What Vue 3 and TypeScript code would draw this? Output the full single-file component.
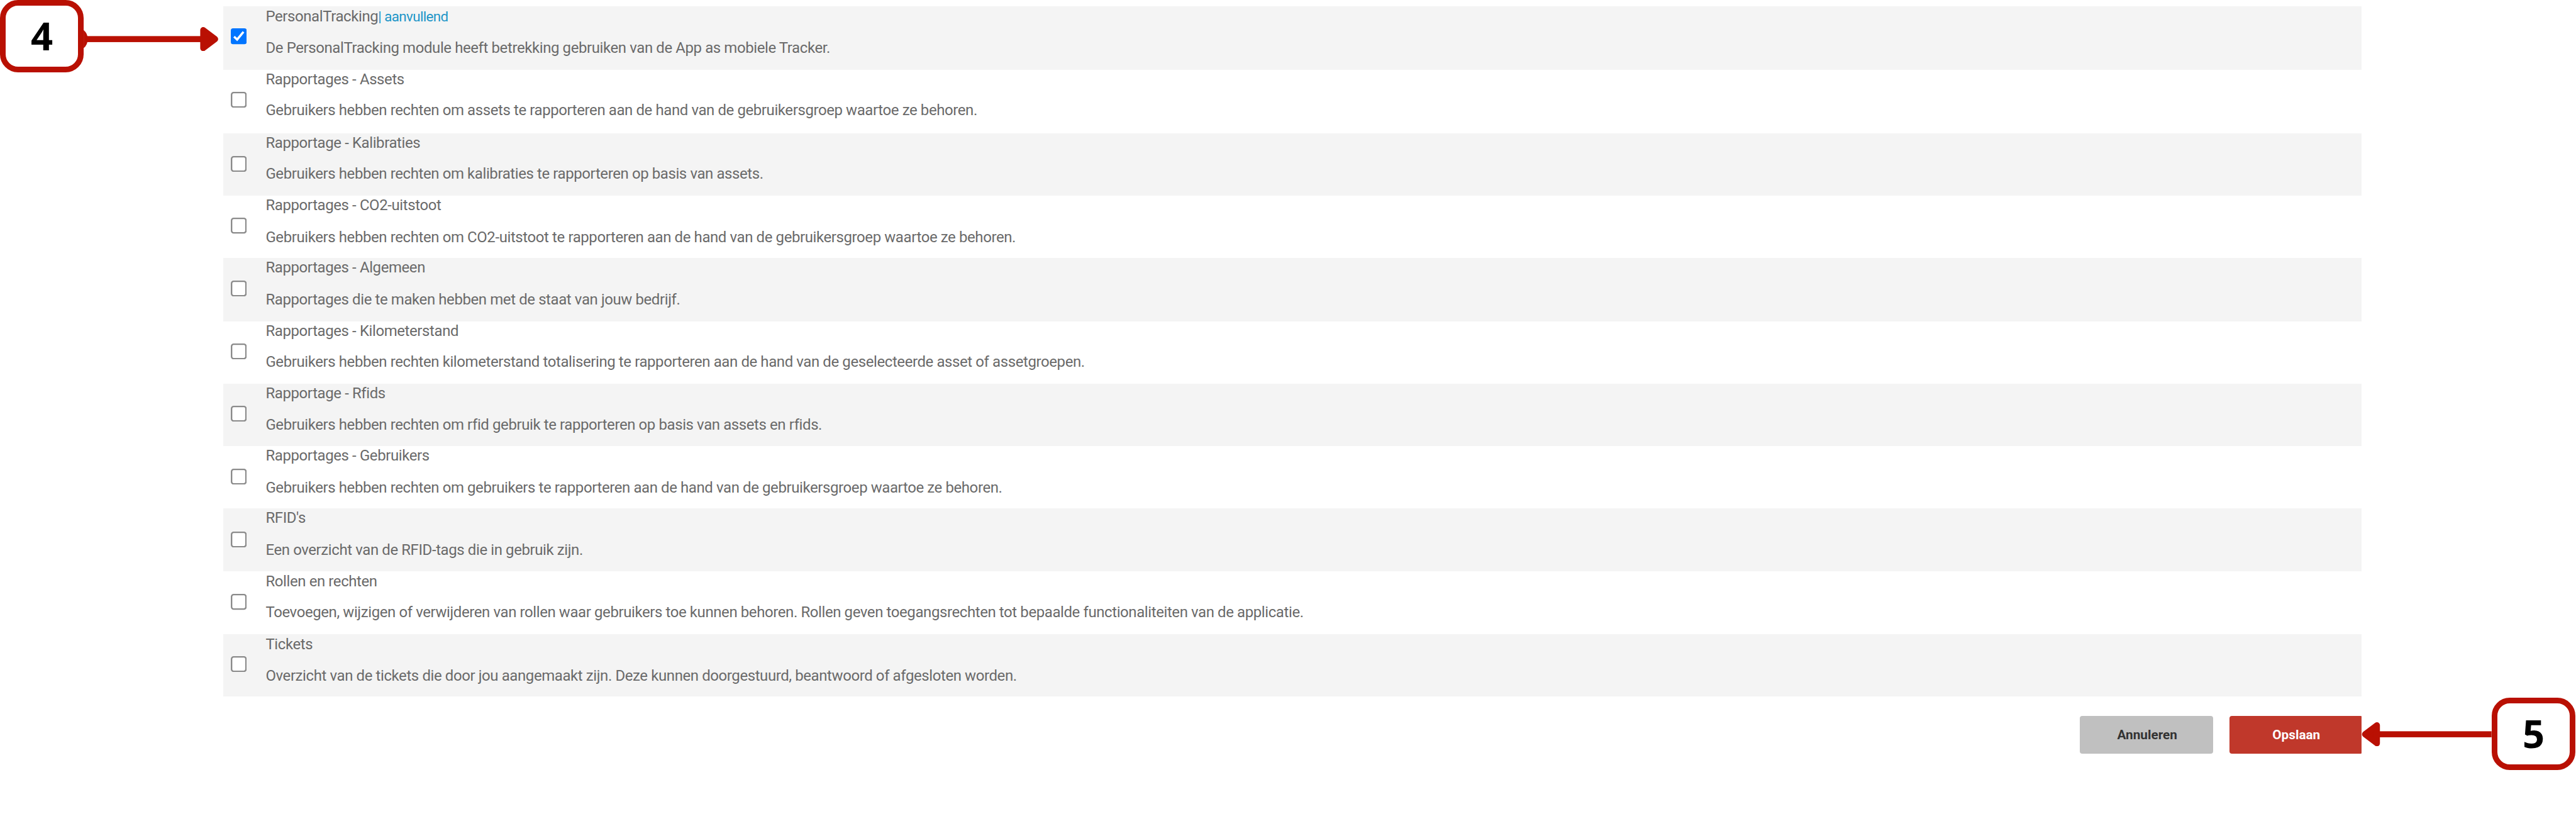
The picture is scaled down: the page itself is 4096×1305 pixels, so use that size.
<script setup lang="ts">
interface Right {
  title: string
  tag?: string
  text: string
  checked?: boolean
  height: number
  box: number
  gap: number
}

// height, box centre and text gap are in design pixels
const rights: Right[] = [
  { title: 'PersonalTracking', tag: 'aanvullend', text: 'De PersonalTracking module heeft betrekking gebruiken van de App as mobiele Tracker.', checked: true, height: 126, box: 59.8, gap: 63.4 },
  { title: 'Rapportages - Assets', text: 'Gebruikers hebben rechten om assets te rapporteren aan de hand van de gebruikersgroep waartoe ze behoren.', height: 126.8, box: 59.6, gap: 61.4 },
  { title: 'Rapportage - Kalibraties', text: 'Gebruikers hebben rechten om kalibraties te rapporteren op basis van assets.', height: 123.8, box: 60.5, gap: 61.2 },
  { title: 'Rapportages - CO2-uitstoot', text: 'Gebruikers hebben rechten om CO2-uitstoot te rapporteren aan de hand van de gebruikersgroep waartoe ze behoren.', height: 124.4, box: 60.7, gap: 63.3 },
  { title: 'Rapportages - Algemeen', text: 'Rapportages die te maken hebben met de staat van jouw bedrijf.', height: 126, box: 60.6, gap: 63 },
  { title: 'Rapportages - Kilometerstand', text: 'Gebruikers hebben rechten kilometerstand totalisering te rapporteren aan de hand van de geselecteerde asset of assetgroepen.', height: 124.3, box: 60.3, gap: 61.4 },
  { title: 'Rapportage - Rfids', text: 'Gebruikers hebben rechten om rfid gebruik te rapporteren op basis van assets en rfids.', height: 123.9, box: 60.3, gap: 63 },
  { title: 'Rapportages - Gebruikers', text: 'Gebruikers hebben rechten om gebruikers te rapporteren aan de hand van de gebruikersgroep waartoe ze behoren.', height: 124.6, box: 60.9, gap: 63.5 },
  { title: "RFID's", text: 'Een overzicht van de RFID-tags die in gebruik zijn.', height: 125.7, box: 61.8, gap: 63.4 },
  { title: 'Rollen en rechten', text: 'Toevoegen, wijzigen of verwijderen van rollen waar gebruikers toe kunnen behoren. Rollen geven toegangsrechten tot bepaalde functionaliteiten van de applicatie.', height: 125, box: 60.8, gap: 61.7 },
  { title: 'Tickets', text: 'Overzicht van de tickets die door jou aangemaakt zijn. Deze kunnen doorgestuurd, beantwoord of afgesloten worden.', height: 123.9, box: 59.7, gap: 63.4 },
]
</script>

<template>
  <main class="page">
    <section class="rights">
      <div v-for="r in rights" :key="r.title" class="right" :style="{ height: r.height / 10 + 'rem' }">
        <div class="tick" :style="{ height: r.box / 5 + 'rem' }">
          <svg v-if="r.checked" class="box" viewBox="0 0 32 32">
            <rect width="32" height="32" rx="4.5" fill="#0075ff" />
            <path d="M6.5 16.8 L12.7 22.6 L25.5 7" fill="none" stroke="#fff" stroke-width="4.4" />
          </svg>
          <svg v-else class="box" viewBox="0 0 32 32">
            <rect x="1.5" y="1.5" width="29" height="29" rx="4.2" fill="#fff" stroke="#8a8a8a" stroke-width="3" />
          </svg>
        </div>
        <div class="copy">
          <p class="line">{{ r.title }}<span v-if="r.tag" class="tag">| {{ r.tag }}</span></p>
          <p class="line" :style="{ marginTop: (r.gap - 36) / 10 + 'rem' }">{{ r.text }}</p>
        </div>
      </div>
    </section>

    <footer class="actions">
      <button class="btn cancel" type="button">Annuleren</button>
      <button class="btn save" type="button">Opslaan</button>
    </footer>

    <div class="callout four">
      <span class="badge">4</span>
      <svg class="arrow" viewBox="0 0 269 48">
        <path d="M0 6 Q8 13 8.3 24 Q8 35 0 42 Z" />
        <rect x="6" y="18" width="228" height="12" />
        <path d="M238.3 6 L262 24 L238.3 42 Z" stroke-width="12" stroke-linejoin="round" />
      </svg>
    </div>
    <div class="callout five">
      <svg class="arrow" viewBox="0 0 259 48">
        <rect x="34" y="18" width="225" height="12" />
        <path d="M30.6 6 L6.9 24 L30.6 42 Z" stroke-width="12" stroke-linejoin="round" />
      </svg>
      <span class="badge">5</span>
    </div>
  </main>
</template>

<style>
html {
  font-size: 7.9813px;
  background: #fff;
}
</style>

<style scoped>
.page {
  position: relative;
  box-sizing: border-box;
  width: 4096px;
  height: 1305px;
  padding: 1.27rem 42.7rem 0 44.5rem;
  overflow: hidden;
  background: #fff;
  font-family: Roboto, "Liberation Sans", sans-serif;
}
.right {
  display: flex;
  color: #6a6a6a;
}
.right:nth-child(odd) {
  background: #f4f4f4;
}
.tick {
  display: flex;
  align-items: center;
  width: 8.43rem;
  padding-left: 1.47rem;
  box-sizing: border-box;
}
.box {
  display: block;
  width: 3.17rem;
  height: 3.17rem;
}
.copy {
  padding-top: 0.18rem;
}
.line {
  margin: 0;
  height: 3.6rem;
  line-height: 3.6rem;
  font-size: 3rem;
  letter-spacing: -0.048rem;
  white-space: nowrap;
}
.tag {
  color: #2196c8;
  font-size: 2.8rem;
  letter-spacing: -0.075rem;
}
.actions {
  display: flex;
  justify-content: flex-end;
  gap: 3.3rem;
  margin-top: 3.85rem;
}
.btn {
  height: 7.55rem;
  padding: 0 0 0 0.25rem;
  border: 0;
  border-radius: 0.5rem;
  font: 700 2.6rem/7.55rem Roboto, "Liberation Sans", sans-serif;
}
.cancel {
  width: 26.5rem;
  background: #c0c0c0;
  color: #333;
}
.save {
  width: 26.3rem;
  border-radius: 0.5rem 0.15rem 0.15rem 0.5rem;
  background: #c0382b;
  color: #fff;
}
.callout {
  position: absolute;
  display: flex;
  align-items: center;
}
.four {
  top: 0;
  left: 0;
}
.five {
  top: 139rem;
  right: 0.1rem;
}
.badge {
  box-sizing: border-box;
  width: 16.67rem;
  height: 14.4rem;
  border: 1.2rem solid #b91003;
  border-radius: 3.6rem;
  background: #fff;
  color: #000;
  font: 700 7.7rem/11.85rem "Open Sans", "Noto Sans", sans-serif;
  text-align: center;
}
.arrow {
  display: block;
  height: 4.8rem;
  fill: #b91003;
  stroke: #b91003;
  stroke-width: 0;
}
.four .arrow {
  width: 26.9rem;
  margin-top: 1.2rem;
}
.five .arrow {
  width: 25.9rem;
}
</style>
